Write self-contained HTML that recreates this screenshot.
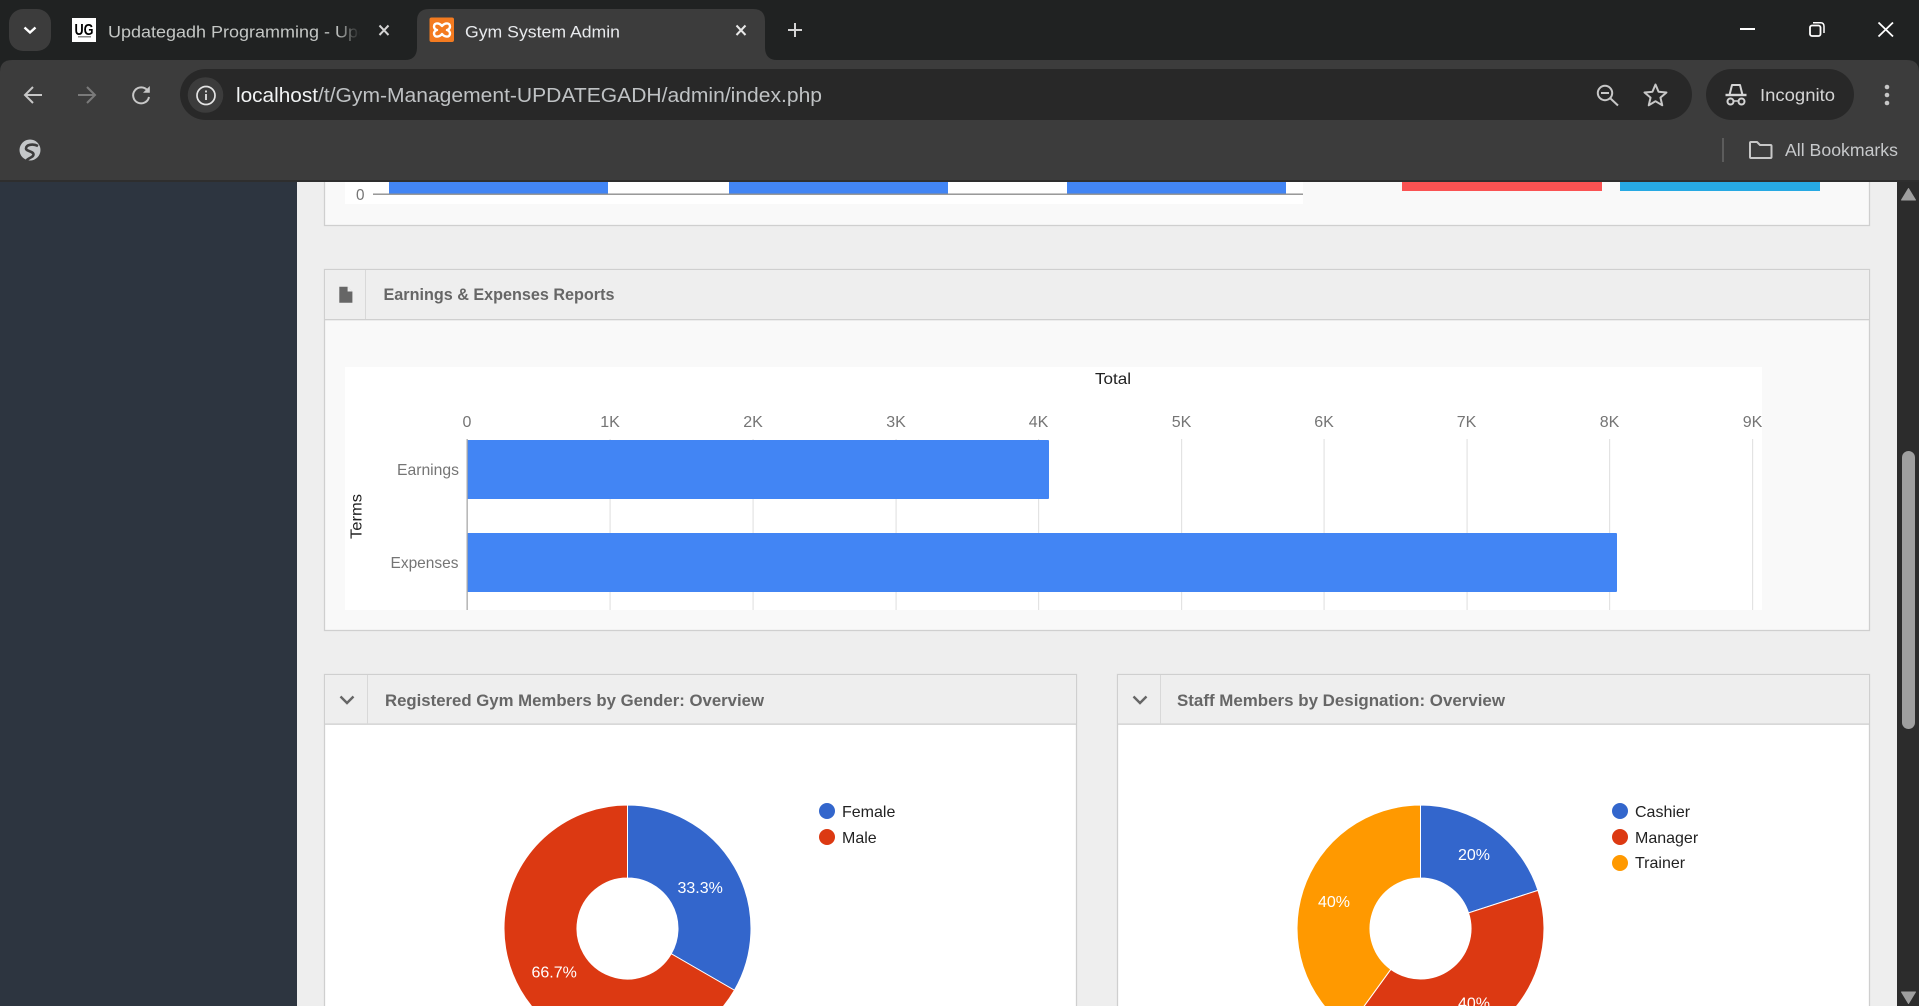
<!DOCTYPE html>
<html lang="en">
<head>
<meta charset="utf-8">
<title>Gym System Admin</title>
<style>
html,body{margin:0;padding:0;width:1919px;height:1006px;overflow:hidden;background:#eee}
svg{display:block}
text{font-family:"Liberation Sans",Arial,sans-serif}
.tick{font-size:16px;fill:#757575}
.ttl{font-size:17px;font-weight:bold;fill:#666}
.leg{font-size:16px;fill:#222}
.pct{font-size:16px;fill:#fff}
</style>
</head>
<body>
<svg width="1919" height="1006" viewBox="0 0 1919 1006" xmlns="http://www.w3.org/2000/svg">
<defs>
<linearGradient id="fade" x1="0" x2="1" y1="0" y2="0"><stop offset="0" stop-color="#202222" stop-opacity="0"/><stop offset="1" stop-color="#202222"/></linearGradient>
<clipPath id="c1"><rect x="100" y="15" width="260" height="35"/></clipPath>
<clipPath id="ch"><rect x="345" y="367" width="1417" height="243"/></clipPath>
</defs>

<!-- page -->
<rect width="1919" height="1006" fill="#eeeeee"/>
<rect x="0" y="182" width="297" height="824" fill="#2d3540"/>

<!-- top panel -->
<rect x="324.5" y="150" width="1545" height="75.5" fill="#f9f9f9" stroke="#cfcfcf" stroke-width="1.3"/>
<rect x="345" y="150" width="958" height="54" fill="#fff"/>
<text x="356" y="200" class="tick" textLength="8.5" lengthAdjust="spacingAndGlyphs">0</text>
<rect x="373" y="193.5" width="930" height="1.4" fill="#8f8f8f"/>
<rect x="389" y="170" width="219" height="23.5" fill="#4285f4"/>
<rect x="729" y="170" width="219" height="23.5" fill="#4285f4"/>
<rect x="1067" y="170" width="219" height="23.5" fill="#4285f4"/>
<rect x="1402" y="170" width="200" height="21" fill="#fa5252"/>
<rect x="1620" y="170" width="200" height="21" fill="#27a9e3"/>

<!-- earnings panel -->
<rect x="324.5" y="269.5" width="1545" height="361" fill="#f9f9f9" stroke="#cfcfcf" stroke-width="1.3"/>
<rect x="325" y="270" width="1544" height="49.5" fill="#eeeeee"/>
<rect x="324.5" y="319" width="1545" height="1.3" fill="#cfcfcf"/>
<rect x="365" y="270" width="1" height="49" fill="#d8d8d8"/>
<path d="M339.3 286.7H347.5L352.4 291.6V302.8H339.3Z" fill="#666"/>
<path d="M347.6 286.7V291.5H352.4Z" fill="#eee"/>
<text x="383.5" y="300" class="ttl" textLength="231" lengthAdjust="spacingAndGlyphs">Earnings &amp; Expenses Reports</text>

<rect x="345" y="367" width="1417" height="243" fill="#fff"/>
<g clip-path="url(#ch)">
<g fill="#e3e3e3">
<rect x="609.5" y="439" width="1.2" height="171"/>
<rect x="752.5" y="439" width="1.2" height="171"/>
<rect x="895.5" y="439" width="1.2" height="171"/>
<rect x="1038" y="439" width="1.2" height="171"/>
<rect x="1181" y="439" width="1.2" height="171"/>
<rect x="1323.5" y="439" width="1.2" height="171"/>
<rect x="1466.5" y="439" width="1.2" height="171"/>
<rect x="1609" y="439" width="1.2" height="171"/>
<rect x="1752" y="439" width="1.2" height="171"/>
</g>
<rect x="467" y="440" width="582" height="59" rx="1" fill="#4285f4"/>
<rect x="467" y="533" width="1150" height="59" rx="1" fill="#4285f4"/>
<rect x="466.5" y="439" width="1.3" height="171" fill="#a8a8a8"/>
<g class="tick" text-anchor="middle">
<text x="467" y="427" class="tick">0</text>
<text x="610" y="427" class="tick">1K</text>
<text x="753" y="427" class="tick">2K</text>
<text x="896" y="427" class="tick">3K</text>
<text x="1038.5" y="427" class="tick">4K</text>
<text x="1181.5" y="427" class="tick">5K</text>
<text x="1324" y="427" class="tick">6K</text>
<text x="1466.5" y="427" class="tick">7K</text>
<text x="1609.5" y="427" class="tick">8K</text>
<text x="1752.5" y="427" class="tick">9K</text>
</g>
</g>
<text x="1095" y="384" font-size="16" fill="#222" textLength="36" lengthAdjust="spacingAndGlyphs">Total</text>
<text x="397" y="475" class="tick" textLength="62" lengthAdjust="spacingAndGlyphs">Earnings</text>
<text x="390.5" y="568" class="tick" textLength="68" lengthAdjust="spacingAndGlyphs">Expenses</text>
<text transform="translate(361.5,539) rotate(-90)" font-size="16" fill="#222" textLength="45" lengthAdjust="spacingAndGlyphs">Terms</text>

<!-- gender panel -->
<rect x="324.5" y="674.5" width="752" height="340" fill="#fff" stroke="#cfcfcf" stroke-width="1.3"/>
<rect x="325" y="675" width="751" height="49" fill="#eeeeee"/>
<rect x="324.5" y="723.5" width="752" height="1.3" fill="#cfcfcf"/>
<rect x="367" y="675" width="1" height="49" fill="#d8d8d8"/>
<path d="M340.5 696.5L347 703L353.5 696.5" fill="none" stroke="#666" stroke-width="2.4"/>
<text x="385" y="706" class="ttl" textLength="379" lengthAdjust="spacingAndGlyphs">Registered Gym Members by Gender: Overview</text>

<g transform="translate(627.5,928.5)" stroke="#fff" stroke-width="1">
<path d="M0 -123.5A123.5 123.5 0 0 1 106.95 61.75L43.73 25.25A50.5 50.5 0 0 0 0 -50.5Z" fill="#3366cc"/>
<path d="M106.95 61.75A123.5 123.5 0 1 1 0 -123.5L0 -50.5A50.5 50.5 0 1 0 43.73 25.25Z" fill="#dc3912"/>
</g>
<text x="677.5" y="893" class="pct">33.3%</text>
<text x="531.5" y="977.5" class="pct">66.7%</text>
<circle cx="827" cy="811" r="8" fill="#3366cc"/>
<circle cx="827" cy="837" r="8" fill="#dc3912"/>
<text x="842" y="817" class="leg">Female</text>
<text x="842" y="843" class="leg">Male</text>

<!-- staff panel -->
<rect x="1117.5" y="674.5" width="752" height="340" fill="#fff" stroke="#cfcfcf" stroke-width="1.3"/>
<rect x="1118" y="675" width="751" height="49" fill="#eeeeee"/>
<rect x="1117.5" y="723.5" width="752" height="1.3" fill="#cfcfcf"/>
<rect x="1160" y="675" width="1" height="49" fill="#d8d8d8"/>
<path d="M1133.5 696.5L1140 703L1146.5 696.5" fill="none" stroke="#666" stroke-width="2.4"/>
<text x="1177" y="706" class="ttl" textLength="328" lengthAdjust="spacingAndGlyphs">Staff Members by Designation: Overview</text>

<g transform="translate(1420.5,928.5)" stroke="#fff" stroke-width="1">
<path d="M0 -123.5A123.5 123.5 0 0 1 117.46 -38.16L48.03 -15.6A50.5 50.5 0 0 0 0 -50.5Z" fill="#3366cc"/>
<path d="M117.46 -38.16A123.5 123.5 0 0 1 -72.59 99.91L-29.68 40.85A50.5 50.5 0 0 0 48.03 -15.6Z" fill="#dc3912"/>
<path d="M-72.59 99.91A123.5 123.5 0 0 1 0 -123.5L0 -50.5A50.5 50.5 0 0 0 -29.68 40.85Z" fill="#ff9900"/>
</g>
<text x="1458" y="860" class="pct">20%</text>
<text x="1318" y="907" class="pct">40%</text>
<text x="1458" y="1008.5" class="pct">40%</text>
<circle cx="1620" cy="811" r="8" fill="#3366cc"/>
<circle cx="1620" cy="837" r="8" fill="#dc3912"/>
<circle cx="1620" cy="863" r="8" fill="#ff9900"/>
<text x="1635" y="817" class="leg">Cashier</text>
<text x="1635" y="843" class="leg">Manager</text>
<text x="1635" y="868" class="leg">Trainer</text>

<!-- scrollbar -->
<rect x="1897" y="182" width="22" height="824" fill="#2c2c2c"/>
<path d="M1908.5 188.5L1915.5 200H1901.5Z" fill="#9f9f9f" stroke="#9f9f9f" stroke-width="1" stroke-linejoin="round"/>
<path d="M1901.5 992H1915.5L1908.5 1003.5Z" fill="#9f9f9f" stroke="#9f9f9f" stroke-width="1" stroke-linejoin="round"/>
<rect x="1902" y="451" width="13" height="278" rx="6.5" fill="#9f9f9f"/>

<!-- browser chrome -->
<rect x="0" y="0" width="1919" height="75" fill="#202222"/>
<path d="M0 182V72Q0 60 12 60H1907Q1919 60 1919 72V182Z" fill="#3c3c3c"/>
<rect x="0" y="180" width="1919" height="2" fill="#2e2e2e"/>

<rect x="9" y="9" width="42" height="42" rx="14" fill="#3c3c3c"/>
<path d="M24.5 27.5L30 32.5L35.5 27.5" fill="none" stroke="#fff" stroke-width="2.4"/>

<!-- tab 1 -->
<rect x="72" y="18" width="24" height="24" fill="#fff"/>
<text x="74.5" y="35" font-size="15.5" font-weight="bold" fill="#000" textLength="19" lengthAdjust="spacingAndGlyphs">UG</text>
<rect x="78" y="36" width="13" height="1.5" fill="#888"/>
<g clip-path="url(#c1)"><text x="108" y="37.5" font-size="17" fill="#c4c7c5" textLength="325" lengthAdjust="spacingAndGlyphs">Updategadh Programming - Updategadh</text></g>
<rect x="336" y="15" width="24" height="35" fill="url(#fade)"/>
<path d="M379.5 25.5L388.5 35M388.5 25.5L379.5 35" stroke="#d4d4d4" stroke-width="2"/>

<!-- tab 2 -->
<path d="M405 60Q416.500 60 417 48V21Q417 9 429 9H753Q765 9 765 21V48Q765.500 60 777 60Z" fill="#3c3c3c"/>
<rect x="429.500" y="17.500" width="24.500" height="24.500" rx="2" fill="#f47b20"/>
<path d="M442 26C439 22.500 434 22.500 434 26.500C434 28.500 435.500 29.500 437 30C435.500 30.500 434 31.500 434 33.500C434 37.500 439 37.500 442 34C445 37.500 450 37.500 450 33.500C450 31.500 448.500 30.500 447 30C448.500 29.500 450 28.500 450 26.500C450 22.500 445 22.500 442 26Z" fill="none" stroke="#fff" stroke-width="2.400" stroke-linejoin="round"/>
<text x="465" y="37.5" font-size="17" fill="#e8eaed" textLength="155" lengthAdjust="spacingAndGlyphs">Gym System Admin</text>
<path d="M736.500 25.500L745.500 35M745.500 25.500L736.500 35" stroke="#e8e8e8" stroke-width="2"/>
<path d="M788 30H802M795 23V37" stroke="#d4d4d4" stroke-width="2"/>

<!-- window controls -->
<rect x="1740" y="28" width="15" height="2" fill="#fff"/>
<rect x="1810" y="25.500" width="10.500" height="10.500" rx="2" fill="none" stroke="#fff" stroke-width="1.800"/>
<path d="M1813 22.800H1820.500Q1824 22.800 1824 26.500V33" fill="none" stroke="#fff" stroke-width="1.500"/>
<path d="M1878.500 22.500L1893 36.500M1893 22.500L1878.500 36.500" stroke="#fff" stroke-width="1.800"/>

<!-- toolbar icons -->
<path d="M25 95H42M33 87L25 95L33 103" fill="none" stroke="#c7c7c7" stroke-width="2"/>
<path d="M78 95H95M87 87L95 95L87 103" fill="none" stroke="#7a7a7a" stroke-width="2"/>
<path d="M147.500 90.500A8 8 0 1 0 149 97" fill="none" stroke="#c7c7c7" stroke-width="2"/>
<path d="M149.800 86V92.800H143Z" fill="#c7c7c7"/>

<!-- omnibox -->
<rect x="180" y="69" width="1512" height="51" rx="25.500" fill="#282828"/>
<circle cx="205.500" cy="95" r="17.800" fill="#3c3c3c"/>
<circle cx="206" cy="95.500" r="9" fill="none" stroke="#e3e3e3" stroke-width="1.700"/>
<rect x="205.100" y="94" width="1.800" height="6" fill="#e3e3e3"/>
<rect x="205.100" y="90.500" width="1.800" height="1.900" fill="#e3e3e3"/>
<text x="236" y="102" font-size="20" fill="#f1f3f4" textLength="82" lengthAdjust="spacingAndGlyphs">localhost</text>
<text x="318" y="102" font-size="20" fill="#bfc2c4" textLength="504" lengthAdjust="spacingAndGlyphs">/t/Gym-Management-UPDATEGADH/admin/index.php</text>

<circle cx="1605" cy="93" r="7.200" fill="none" stroke="#c7c7c7" stroke-width="2"/>
<path d="M1610.500 98.500L1618 105.500" stroke="#c7c7c7" stroke-width="2"/>
<rect x="1601" y="92" width="8" height="2" fill="#c7c7c7"/>
<polygon points="1655.500,84.500 1658.560,91.790 1666.440,92.450 1660.450,97.600 1662.260,105.300 1655.500,101.200 1648.740,105.300 1650.550,97.600 1644.560,92.450 1652.440,91.790" fill="none" stroke="#c7c7c7" stroke-width="2" stroke-linejoin="round"/>

<!-- incognito pill -->
<rect x="1706" y="69" width="148" height="51" rx="25.500" fill="#282828"/>
<path d="M1729.500 95L1732 85H1740L1742.500 95Z" fill="none" stroke="#d5d5d5" stroke-width="2" stroke-linejoin="round"/>
<rect x="1725.500" y="93.800" width="21" height="2.400" fill="#d5d5d5"/>
<circle cx="1730.500" cy="101.500" r="3" fill="none" stroke="#d5d5d5" stroke-width="2"/>
<circle cx="1741.500" cy="101.500" r="3" fill="none" stroke="#d5d5d5" stroke-width="2"/>
<path d="M1733.500 101H1738.500" stroke="#d5d5d5" stroke-width="1.500"/>
<text x="1760" y="101" font-size="17.500" fill="#d5d5d5" textLength="75" lengthAdjust="spacingAndGlyphs">Incognito</text>
<circle cx="1887" cy="87" r="2.300" fill="#c7c7c7"/>
<circle cx="1887" cy="95" r="2.300" fill="#c7c7c7"/>
<circle cx="1887" cy="103" r="2.300" fill="#c7c7c7"/>

<!-- bookmarks bar -->
<circle cx="30" cy="150" r="10.500" fill="#c4c7c9"/>
<path d="M38 146C33 143.500 26 144.500 26 148.500C26 151.500 33.500 151 33.500 154.500C33.500 157.500 28.500 157.500 26 161" fill="none" stroke="#3c3c3c" stroke-width="2.600"/>
<rect x="1722" y="138" width="2" height="24" fill="#5c5c5c"/>
<path d="M1750 143Q1750 142 1751 142H1757L1760 145H1770.500Q1771.500 145 1771.500 146V157Q1771.500 158 1770.500 158H1751Q1750 158 1750 157Z" fill="none" stroke="#c7c7c7" stroke-width="2" stroke-linejoin="round"/>
<text x="1785" y="156" font-size="17.500" fill="#c7c9cb" textLength="113" lengthAdjust="spacingAndGlyphs">All Bookmarks</text>
</svg>
</body>
</html>
